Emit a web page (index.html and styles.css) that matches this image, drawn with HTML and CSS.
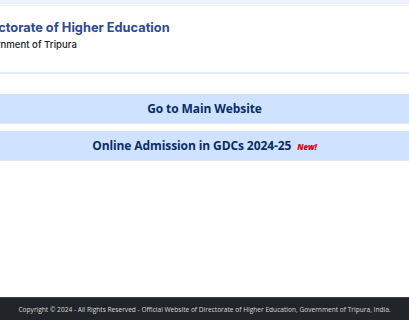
FILE: index.html
```html
<!DOCTYPE html>
<html lang="en">
<head>
  <meta charset="UTF-8">
  <meta name="viewport" content="width=device-width, initial-scale=1.0">
  <title>Directorate of Higher Education</title>
  <link rel="stylesheet" href="styles.css">
</head>
<body>
  <div class="topbar"></div>

  <header class="site-header">
    <div class="brand">
      <h1>Directorate of Higher Education</h1>
      <p>Government of Tripura</p>
    </div>
  </header>

  <main class="links">
    <a href="#" class="link-btn">Go to Main Website</a>
    <a href="#" class="link-btn">Online Admission in GDCs 2024-25 <span class="new">New!</span></a>
  </main>

  <footer>
    <p>Copyright © 2024 - All Rights Reserved - Official Website of Directorate of Higher Education, Government of Tripura, India.</p>
  </footer>
</body>
</html>
```
FILE: styles.css
```css
html, body {
  height: 100%;
}
body {
  margin: 0;
  font-family: "Open Sans", Arial, sans-serif;
  display: flex;
  flex-direction: column;
  overflow: hidden;
  background-color: #fff;
}
.topbar {
  height: 4px;
  background-color: #eef1fb;
}
.site-header {
  margin-top: 1px;
  height: 66px;
  background-color: #fff;
  border-top: 1px solid #f4f4f6;
  border-bottom: 2px solid #e0ecfc;
  display: flex;
  align-items: flex-start;
}
.brand {
  margin-left: -27px;
  padding-top: 14px;
}
.brand h1 {
  margin: 0;
  font-family: Inter, sans-serif;
  font-size: 12.8px;
  font-weight: 700;
  color: #2c4a93;
}
.brand p {
  margin: 4px 0 0;
  font-family: Inter, sans-serif;
  font-size: 9.6px;
  font-weight: 500;
  color: #222;
}
.links {
  padding-top: 20px;
  display: flex;
  flex-direction: column;
  gap: 7px;
}
.link-btn {
  display: block;
  height: 29px;
  line-height: 29px;
  text-align: center;
  background-color: #cfe2ff;
  color: #0a2c66;
  font-size: 12px;
  font-weight: 700;
  letter-spacing: -0.1px;
  text-decoration: none;
  border-bottom: 1px solid #e4e8ee;
}
.new {
  color: #e00000;
  font-style: italic;
  font-size: 8px;
  font-weight: 800;
  margin-left: 3px;
}
footer {
  margin-top: auto;
  background-color: #212529;
  border-top: 1px solid #3a3e44;
  height: 22px;
  display: flex;
  align-items: center;
  justify-content: center;
}
footer p {
  margin: 0;
  color: #d8d8d8;
  font-size: 6.6px;
  font-family: "Open Sans", sans-serif;
}
```
